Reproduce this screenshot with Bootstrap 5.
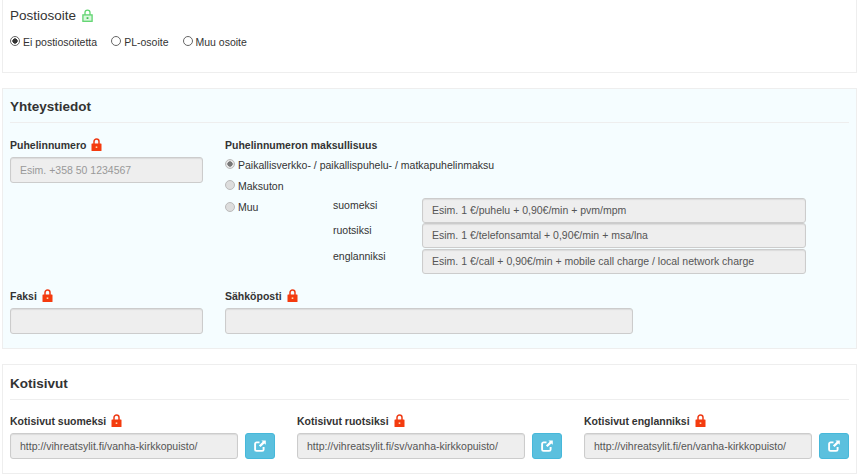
<!DOCTYPE html>
<html lang="fi">
<head>
<meta charset="utf-8">
<title>Osoitetiedot</title>
<link href="https://cdn.jsdelivr.net/npm/bootstrap@5.3.0/dist/css/bootstrap.min.css" rel="stylesheet">
<style>
html,body{height:475px;overflow:hidden}
body{font-family:"Liberation Sans",Arial,sans-serif;font-size:10.5px;color:#333;background:#fff;padding:0 2px}
.sheet{border:1px solid #eee;padding:0 7px;background:#fff}
.sheet-a{height:74px;margin-top:-1px;margin-bottom:15px;padding-top:6px}
.sheet-b{height:261px;margin-bottom:15px;background:#f5fdff;padding-top:8px}
.sheet-c{height:110px;padding-top:9px}
.lead-title{font-size:13.5px;line-height:20px;color:#333;margin:0}
.sheet-head{font-size:13.5px;font-weight:700;line-height:20px;color:#333;margin:0;padding-bottom:5px;border-bottom:1px solid #eee}
.rad-line{margin-top:9px}
.row-top{margin-top:15px}
.fld-label{font-weight:700;font-size:10.5px;line-height:14px;display:block;margin:0 0 5px}
.fld-label.tight{margin-bottom:6px}
.field{height:26px;border:1px solid #ccc;border-radius:3px;background:#eee;color:#555;font-size:10.5px;line-height:24px;padding:0 9px;box-shadow:inset 0 1px 1px rgba(0,0,0,.08);white-space:nowrap;overflow:hidden}
.field.hint{color:#999}
.rad{display:flex;align-items:center;line-height:14px;white-space:nowrap;margin:0}
.rad.spaced{margin-right:14px}
.rad.first{margin-bottom:7px}
.rad.second{margin-bottom:7px}
.rad.muu{width:108px;align-items:flex-start}
.muu .dot{top:2px}
.dot{width:10px;height:10px;border-radius:50%;border:1px solid #666;background:#fff;margin-right:3px;flex:none;position:relative;top:-1px}
.dot.on{background:radial-gradient(circle,#333 0 2.4px,#fff 2.9px)}
.dot.off{border-color:#bbb;background:#ddd}
.dot.off.on{background:radial-gradient(circle,#777 0 2.4px,#e4e4e4 2.9px)}
.w-phone{width:193px}
.w-mail{width:408px}
.gap-col{gap:22px}
.row-faksi{margin-top:15px}
.lang-stack{margin-top:-2px}
.lang-name{width:89px;flex:none;line-height:14px}
.lang-row{display:flex;height:25px}
.lang-row.last{margin-top:1px}
.lang-row .field{width:384px;height:25px;line-height:23px}
.lock{width:11px;height:13px;display:inline-block;vertical-align:-2px;margin-left:2px}
.web-row{margin-top:14px}
.web-col{width:287px;flex:none}
.web-col.end{width:265px}
.web-input{width:228px;flex:none}
.go{width:30px;height:26px;border-radius:3px;background:#5bc0de;border:1px solid #46b8da;margin-left:7px;padding:0;display:flex;align-items:center;justify-content:center;flex:none}
</style>
</head>
<body>
<svg width="0" height="0" class="d-none">
  <symbol id="lock-red" viewBox="0 0 11 13"><path d="M3 6V3.6a2.5 2.5 0 0 1 5 0V6" fill="none" stroke="#ee3a14" stroke-width="1.5"/><rect x=".5" y="5.5" width="10" height="7.5" rx=".6" fill="#f43b0e"/><rect x="4.7" y="8.4" width="1.6" height="1.6" fill="#ffd9b0"/></symbol>
  <symbol id="ext" viewBox="0 0 12 12"><path d="M5.5 2.4H2.6A1.5 1.5 0 0 0 1.1 3.9v5.5a1.5 1.5 0 0 0 1.5 1.5h5.5a1.5 1.5 0 0 0 1.5-1.5V7" fill="none" stroke="#fff" stroke-width="1.9"/><path d="M7.4.4H11.8V4.8L10.3 3.4 6.6 7.1 4.9 5.4 8.7 1.8Z" fill="#fff"/></symbol>
</svg>
<section class="sheet sheet-a">
  <h2 class="lead-title fw-normal">Postiosoite <svg class="lock" viewBox="0 0 11 13"><path d="M3 6V3.6a2.5 2.5 0 0 1 5 0V6" fill="none" stroke="#5fd46f" stroke-width="1.3"/><rect x=".9" y="5.9" width="9.2" height="6.4" fill="#d8f7dc" stroke="#5fd46f" stroke-width="1.3"/><rect x="4.6" y="8.2" width="1.8" height="1.8" fill="#3cc050"/></svg></h2>
  <div class="d-flex rad-line">
    <label class="rad spaced"><span class="dot on"></span>Ei postiosoitetta</label>
    <label class="rad spaced"><span class="dot"></span>PL-osoite</label>
    <label class="rad"><span class="dot"></span>Muu osoite</label>
  </div>
</section>

<section class="sheet sheet-b">
  <h3 class="sheet-head">Yhteystiedot</h3>
  <div class="d-flex gap-col row-top">
    <div class="w-phone">
      <label class="fld-label">Puhelinnumero <svg class="lock"><use href="#lock-red"/></svg></label>
      <div class="field hint">Esim. +358 50 1234567</div>
    </div>
    <div class="flex-grow-1">
      <label class="fld-label tight">Puhelinnumeron maksullisuus</label>
      <div class="rad first"><span class="dot off on"></span>Paikallisverkko- / paikallispuhelu- / matkapuhelinmaksu</div>
      <div class="rad second"><span class="dot off"></span>Maksuton</div>
      <div class="d-flex">
        <div class="rad muu"><span class="dot off"></span>Muu</div>
        <div class="lang-stack">
          <div class="lang-row"><span class="lang-name">suomeksi</span><div class="field">Esim. 1 €/puhelu + 0,90€/min + pvm/mpm</div></div>
          <div class="lang-row"><span class="lang-name">ruotsiksi</span><div class="field">Esim. 1 €/telefonsamtal + 0,90€/min + msa/lna</div></div>
          <div class="lang-row last"><span class="lang-name">englanniksi</span><div class="field">Esim. 1 €/call + 0,90€/min + mobile call charge / local network charge</div></div>
        </div>
      </div>
    </div>
  </div>
  <div class="d-flex gap-col row-faksi">
    <div class="w-phone">
      <label class="fld-label">Faksi <svg class="lock"><use href="#lock-red"/></svg></label>
      <div class="field"></div>
    </div>
    <div class="w-mail">
      <label class="fld-label">Sähköposti <svg class="lock"><use href="#lock-red"/></svg></label>
      <div class="field"></div>
    </div>
  </div>
</section>

<section class="sheet sheet-c">
  <h3 class="sheet-head">Kotisivut</h3>
  <div class="d-flex web-row">
    <div class="web-col">
      <label class="fld-label">Kotisivut suomeksi <svg class="lock"><use href="#lock-red"/></svg></label>
      <div class="d-flex"><div class="field web-input">http://vihreatsylit.fi/vanha-kirkkopuisto/</div><button class="go" type="button" aria-label="Avaa"><svg width="12" height="12"><use href="#ext"/></svg></button></div>
    </div>
    <div class="web-col">
      <label class="fld-label">Kotisivut ruotsiksi <svg class="lock"><use href="#lock-red"/></svg></label>
      <div class="d-flex"><div class="field web-input">http://vihreatsylit.fi/sv/vanha-kirkkopuisto/</div><button class="go" type="button" aria-label="Avaa"><svg width="12" height="12"><use href="#ext"/></svg></button></div>
    </div>
    <div class="web-col end">
      <label class="fld-label">Kotisivut englanniksi <svg class="lock"><use href="#lock-red"/></svg></label>
      <div class="d-flex"><div class="field web-input">http://vihreatsylit.fi/en/vanha-kirkkopuisto/</div><button class="go" type="button" aria-label="Avaa"><svg width="12" height="12"><use href="#ext"/></svg></button></div>
    </div>
  </div>
</section>
<script src="https://cdn.jsdelivr.net/npm/bootstrap@5.3.0/dist/js/bootstrap.bundle.min.js"></script>
</body>
</html>
